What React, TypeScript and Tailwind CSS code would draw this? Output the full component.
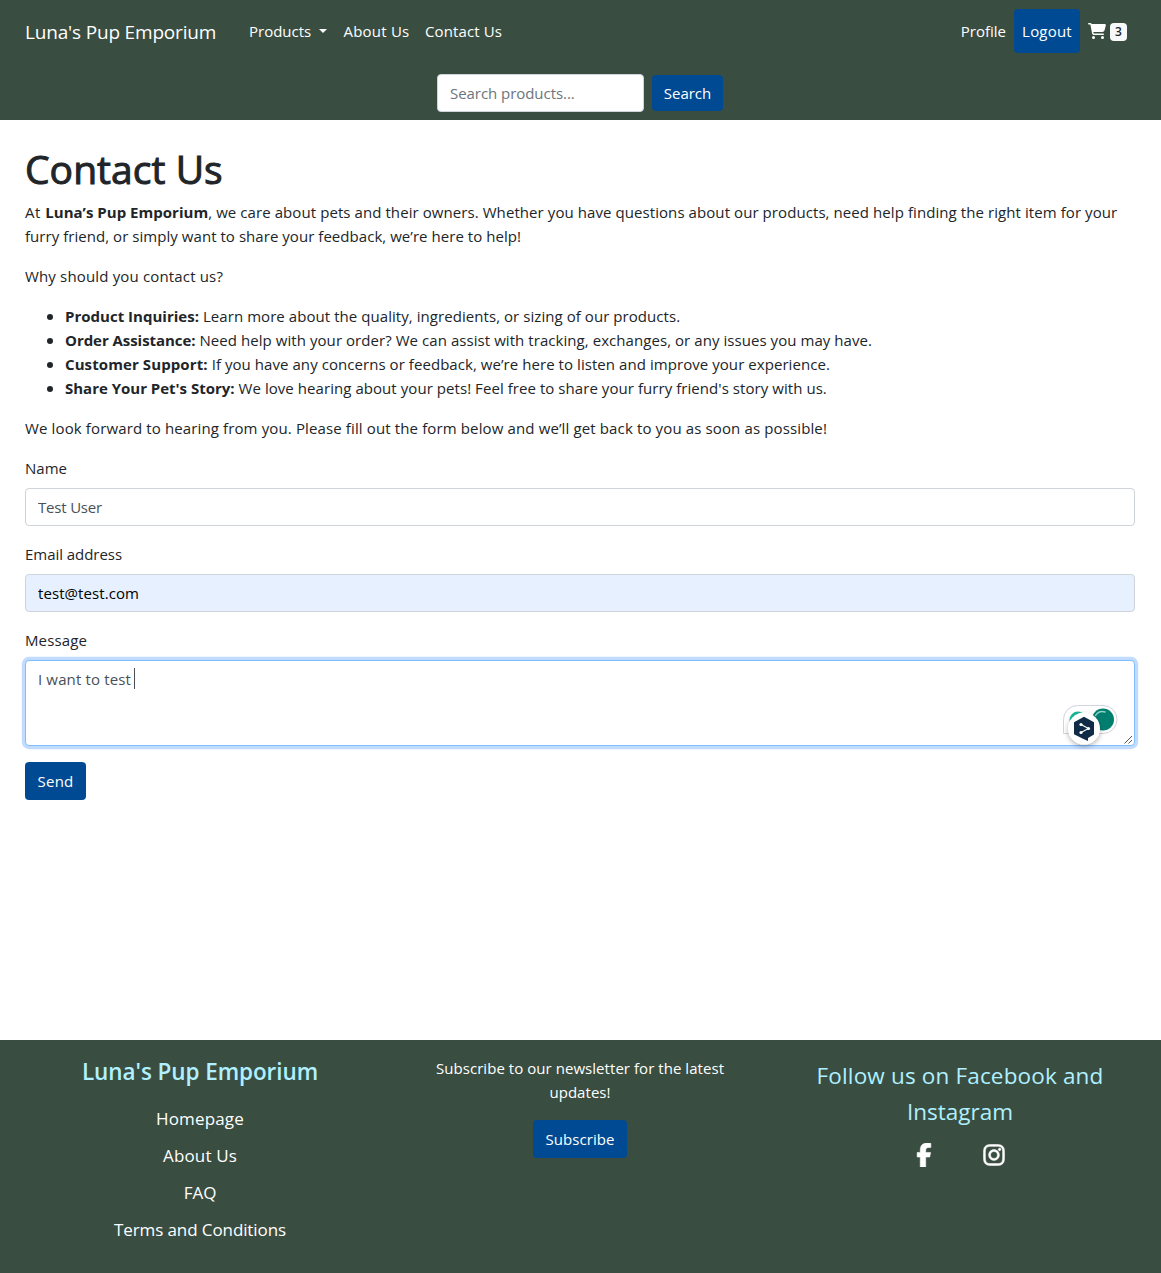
import { FaCartShopping, FaFacebookF, FaInstagram } from "react-icons/fa6";

const reasons = [
  {
    title: "Product Inquiries:",
    titleClass: "tracking-[0.015px]",
    text: "Learn more about the quality, ingredients, or sizing of our products.",
  },
  {
    title: "Order Assistance:",
    titleClass: "tracking-[-0.05px]",
    text: "Need help with your order? We can assist with tracking, exchanges, or any issues you may have.",
  },
  {
    title: "Customer Support:",
    titleClass: "tracking-[0.1px]",
    text: "If you have any concerns or feedback, we’re here to listen and improve your experience.",
  },
  {
    title: "Share Your Pet's Story:",
    titleClass: "tracking-[-0.01px]",
    text: "We love hearing about your pets! Feel free to share your furry friend's story with us.",
  },
];

function Header() {
  return (
    <header className="h-[120px] bg-[#3a4d41] text-white">
      <nav className="flex h-[62px] items-center pl-[25px] pr-[34px]">
        <a className="mt-[1px] w-[191px] whitespace-nowrap text-[19px] leading-[30px] tracking-[-0.18px]">Luna's Pup Emporium</a>
        <div className="ml-[33px] flex flex-1 items-center whitespace-nowrap">
          <a className="flex w-[94.5px] items-center">
            Products
            <span className="ml-[8px] mt-[-1px] border-x-[4.8px] border-t-[4.8px] border-x-transparent border-t-white" />
          </a>
          <a className="w-[81.5px] tracking-[0.22px]">About Us</a>
          <a className="tracking-[0.11px]">Contact Us</a>
        </div>
        <a className="mr-[8px]">Profile</a>
        <a className="flex h-[44px] w-[66px] items-center justify-center rounded-[4px] bg-[#004a94] tracking-[0.2px]">
          Logout
        </a>
        <a className="ml-[8px] flex items-center gap-[4px]">
          <FaCartShopping className="h-[16px] w-[18px]" />
          <span className="mt-[1px] flex h-[18px] w-[17px] items-center justify-center rounded-[4px] bg-[#f8f9fa] text-[12px] leading-none font-semibold text-[#212529]">
            3
          </span>
        </a>
      </nav>
      <form className="mt-[12px] flex items-center justify-center gap-[8px] pr-[1px]">
        <input
          className="h-[38px] w-[207px] rounded-[4px] border border-[#ced4da] bg-white px-[12px] tracking-[-0.05px] placeholder:text-[#6c757d] placeholder:opacity-100"
          placeholder="Search products..."
        />
        <button type="button" className="h-[36px] w-[71px] rounded-[4px] bg-[#004a94] text-white">
          Search
        </button>
      </form>
    </header>
  );
}

function WritingAssistants() {
  return (
    <svg className="absolute left-[1033px] top-[39px]" width="62" height="54" viewBox="0 0 62 54" fill="none">
      <defs>
        <filter id="soft" x="-50%" y="-50%" width="200%" height="200%">
          <feDropShadow dx="0" dy="2" stdDeviation="2.5" floodColor="#000" floodOpacity="0.3" />
        </filter>
      </defs>
      <path d="M4.5 33.500V19.500A14 14 0 0 1 18.500 5.500H44A14 14 0 0 1 44 33.500Z" fill="#fff" stroke="#d2d2e0" />
      <circle cx="19" cy="20" r="8.500" fill="#15b896" />
      <circle cx="44" cy="19.500" r="11" fill="#027e6f" />
      <path d="M36.500 15.500A8.500 8.500 0 0 1 46 12" stroke="#8fd3c8" strokeWidth="1.400" strokeLinecap="round" />
      <circle cx="25" cy="28.500" r="16" fill="#fff" filter="url(#soft)" />
      <path d="M25 16.800L35 22.300V34.600L29 38V41L24 38.800L15 34.300V22.300Z" fill="#0f2b46" />
      <path d="M22 24.500L29.500 28.500L22 32.500" stroke="#fff" strokeWidth="1.100" />
      <circle cx="22" cy="24.500" r="1.600" fill="#fff" />
      <circle cx="29.500" cy="28.500" r="1.600" fill="#fff" />
      <circle cx="22" cy="32.500" r="1.600" fill="#fff" />
    </svg>
  );
}

function ContactForm() {
  return (
    <form className="mt-[16px]">
      <label className="block">Name</label>
      <input
        className="mt-[8px] block h-[38px] w-full rounded-[4px] border border-[#ced4da] px-[12px] tracking-[-0.19px] text-[#495057]"
        defaultValue="Test User"
      />
      <label className="mt-[16px] block tracking-[-0.04px]">Email address</label>
      <input
        className="mt-[8px] block h-[38px] w-full rounded-[4px] border border-[#ced4da] bg-[#e6f0ff] px-[12px] tracking-[0.08px] text-black"
        defaultValue="test@test.com"
      />
      <label className="mt-[16px] block tracking-[0.12px]">Message</label>
      <div className="relative mt-[8px] h-[86px] rounded-[4px] border border-[#80bdff] bg-white px-[12px] py-[6px] text-[#495057] shadow-[0_0_0_3.2px_#c2dcff]">
        <div className="flex tracking-[0.14px]">
          I want to test
          <span className="ml-[3px] mt-[1px] h-[21px] w-px bg-[#495057]" />
        </div>
        <WritingAssistants />
        <svg className="absolute bottom-0 right-0" width="11" height="10" viewBox="0 0 11 10" stroke="#555">
          <path d="M1.500 8.500L9 1M5.500 8.500L9 5" strokeWidth="1" />
        </svg>
      </div>
      <button type="button" className="mt-[16px] block h-[38px] w-[61px] rounded-[4px] bg-[#004a94] tracking-[0.2px] text-white">
        Send
      </button>
    </form>
  );
}

function Footer() {
  return (
    <footer className="grid h-[233px] grid-cols-[380px_380px_380px] bg-[#3a4d41] pl-[10px] text-center text-white">
      <div className="pt-[17px]">
        <h5 className="text-[22.5px] leading-[29px] font-semibold tracking-[-0.08px] text-[#b0f0ff]">Luna's Pup Emporium</h5>
        <div className="mt-[14px] text-[17px] leading-[37px]">
          <a className="block tracking-[0.16px]">Homepage</a>
          <a className="block tracking-[0.15px]">About Us</a>
          <a className="block">FAQ</a>
          <a className="block tracking-[-0.1px]">Terms and Conditions</a>
        </div>
      </div>
      <div className="pt-[16px]">
        <p className="tracking-[0.05px]">
          Subscribe to our newsletter for the latest
          <br />
          updates!
        </p>
        <button type="button" className="mt-[16px] h-[38px] w-[94px] rounded-[4px] bg-[#004a94] tracking-[0.06px]">
          Subscribe
        </button>
      </div>
      <div className="pt-[18px]">
        <p className="text-[22.5px] leading-[36px] text-[#b0f0ff]">
          <span className="tracking-[0.16px]">Follow us on Facebook and</span>
          <br />
          Instagram
        </p>
        <div className="mt-[13px] flex justify-center gap-[46px] pr-[3px]">
          <FaFacebookF size={24} strokeWidth={12} stroke="currentColor" />
          <FaInstagram size={24} strokeWidth={12} stroke="currentColor" />
        </div>
      </div>
    </footer>
  );
}

export default function App() {
  return (
    <div className="flex min-h-[1273px] flex-col bg-white font-['Open_Sans',sans-serif] text-[15px] leading-[24px] text-[#212529]">
      <Header />
      <main className="flex-1 pl-[25px] pr-[26px] pt-[25px]">
        <h1 className="text-[39px] leading-[48px] font-normal tracking-[0.05px] [-webkit-text-stroke:1px_#212529]">Contact Us</h1>
        <p className="mt-[7px] whitespace-nowrap">
          <span className="tracking-[0.5px]">At </span>
          <b className="tracking-[0.03px]">Luna’s Pup Emporium</b>
          <span className="tracking-[0.078px]">
            , we care about pets and their owners. Whether you have questions about our products, need help finding the
            right item for your
          </span>
          <br />
          <span className="tracking-[0.047px]">
            furry friend, or simply want to share your feedback, we’re here to help!
          </span>
        </p>
        <p className="mt-[16px] tracking-[0.16px]">Why should you contact us?</p>
        <ul className="mt-[16px] pl-[22px]">
          {reasons.map((r) => (
            <li key={r.title} className="flex items-center whitespace-pre">
              <span className="mr-[12px] mt-[1px] size-[6px] rounded-full bg-[#212529]" />
              <b className={r.titleClass}>{r.title}</b>
              <span className="tracking-[0.06px]"> {r.text}</span>
            </li>
          ))}
        </ul>
        <p className="mt-[16px] tracking-[0.13px]">
          We look forward to hearing from you. Please fill out the form below and we’ll get back to you as soon as
          possible!
        </p>
        <ContactForm />
      </main>
      <Footer />
    </div>
  );
}
